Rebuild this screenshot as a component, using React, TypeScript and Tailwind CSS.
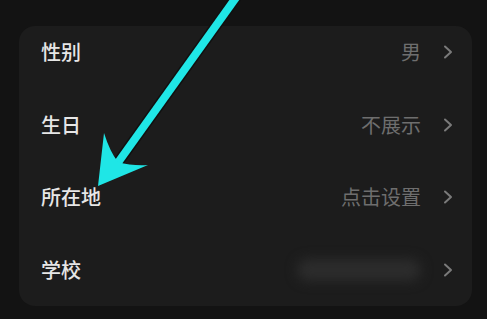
/** Profile settings card with a cyan annotation arrow pointing at the location row. */

interface Row {
  label: string;
  value?: string;
  blurred?: boolean;
}

const rows: Row[] = [
  { label: "性别", value: "男" },
  { label: "生日", value: "不展示" },
  { label: "所在地", value: "点击设置" },
  { label: "学校", blurred: true },
];

function Chevron() {
  return (
    <svg width="10" height="16" viewBox="0 0 10 16" fill="none" className="shrink-0">
      <path d="M2 2.5 L8 8 L2 13.5" stroke="#7a7a7a" strokeWidth="2" strokeLinecap="round" strokeLinejoin="round" />
    </svg>
  );
}

export default function App() {
  return (
    <div
      className="relative h-[319px] w-[487px] overflow-hidden bg-[#131313] pl-[19px] pr-[15px] pt-[26px]"
      style={{ fontFamily: '"Noto Sans CJK SC", "Noto Sans", sans-serif' }}
    >
      <div className="flex h-[280px] flex-col gap-[32px] rounded-[16px] bg-[#1c1c1c] pb-4 pl-[22px] pr-[19px] pt-[6px]">
        {rows.map((row) => (
          <div key={row.label} className="flex h-[41px] items-center justify-between">
            <span className="text-[20px] font-medium text-[#e6e6e6]">{row.label}</span>
            <div className="flex items-center gap-[22px]">
              {row.blurred ? (
                <div className="h-[22px] w-[124px] rounded-full bg-[#2c2c2c] blur-[6px]" />
              ) : (
                <span className="text-[20px] text-[#6e6e6e]">{row.value}</span>
              )}
              <Chevron />
            </div>
          </div>
        ))}
      </div>

      {/* annotation arrow */}
      <svg className="pointer-events-none absolute left-0 top-0" width="487" height="319" viewBox="0 0 487 319">
        <line x1="240" y1="-8" x2="117" y2="164" stroke="#101010" strokeWidth="11" />
        <line x1="240" y1="-8" x2="117" y2="164" stroke="#1fe6e6" strokeWidth="8" />
        <path d="M98 186 L104 133 Q110 152 118 162 Q132 166 148 165 Z" fill="#1fe6e6" />
      </svg>
    </div>
  );
}
